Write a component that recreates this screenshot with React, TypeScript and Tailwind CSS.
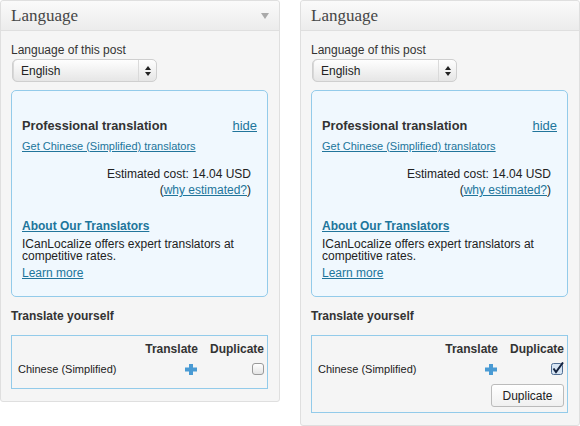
import type { ReactNode } from 'react'

const LINK = 'text-[#21759b] underline'

function SelectBox() {
  return (
    <div className="ml-px mt-[2px] flex h-[23px] w-[145px] items-center rounded-[5px] border border-[#cfcfcf] bg-linear-to-b from-[#fefefe] to-[#e6e6e6] shadow-[inset_1px_0_0_#d8d8d8]">
      <span className="flex-1 pl-[8px] text-[12px] leading-[14px] text-[#222]">English</span>
      <div className="flex h-full w-[18px] items-center justify-center border-l border-[#dadada]">
        <svg width="6" height="10" viewBox="0 0 6 10">
          <path d="M3 0 L6 4 L0 4 Z" fill="#222" />
          <path d="M0 6 L6 6 L3 10 Z" fill="#222" />
        </svg>
      </div>
    </div>
  )
}

function PlusIcon() {
  return (
    <svg width="12" height="11" viewBox="0 0 12 11">
      <rect x="4" y="0" width="4" height="11" fill="#4a9bd4" />
      <rect x="0" y="3.5" width="12" height="4" fill="#4a9bd4" />
    </svg>
  )
}

function Checkbox({ checked }: { checked: boolean }) {
  if (checked) {
    return (
      <svg width="13" height="13" viewBox="0 0 13 13" className="-mt-px">
        <rect x="0.5" y="1.5" width="11" height="11" rx="2" fill="#d6e4f3" stroke="#4f6c92" />
        <path d="M2.5 6.5 L5 10 L12 0.5" stroke="#15233f" strokeWidth="2" fill="none" />
      </svg>
    )
  }
  return (
    <div className="h-[12px] w-[12px] rounded-[3px] border border-[#9a9a9a] bg-linear-to-b from-[#ffffff] to-[#e4e4e4]" />
  )
}

function Panel({ arrow, checked, children }: { arrow?: boolean; checked: boolean; children?: ReactNode }) {
  return (
    <div className="w-[280px] self-start rounded-[3px] border border-[#dfdfdf] bg-[#f5f5f5]">
      {/* header */}
      <div className="flex h-[30px] items-center justify-between rounded-t-[3px] border-b border-[#dfdfdf] bg-linear-to-b from-[#fafafa] to-[#ececec] pl-[10px] pr-[10px]">
        <span className="text-[17px] text-[#464646] [font-family:'Liberation_Serif',Georgia,serif]">Language</span>
        {arrow && (
          <svg width="8" height="6" viewBox="0 0 8 6" className="mt-[1px]">
            <path d="M0 0 L8 0 L4 6 Z" fill="#a9a9a9" />
          </svg>
        )}
      </div>

      <div className="pb-[12px] pl-[10px] pr-[11px] pt-[12px]">
        <p className="text-[12px] leading-[14px] text-[#333]">Language of this post</p>
        <SelectBox />

        {/* professional translation box */}
        <div className="mt-[8px] rounded-[5px] border border-[#93cbea] bg-[#f0f8fe] px-[10px] pb-[15px] pt-[27px]">
          <div className="flex items-center justify-between leading-[16px]">
            <span className="text-[12.75px] font-bold text-[#333]">Professional translation</span>
            <a className={`text-[13px] ${LINK}`}>hide</a>
          </div>
          <a className={`mt-[5px] block text-[11px] leading-[14px] ${LINK}`}>Get Chinese (Simplified) translators</a>
          <div className="mt-[13px] pr-[6px] text-right text-[12px] leading-[16px] text-[#222]">
            <p>Estimated cost: 14.04 USD</p>
            <p>
              (<a className={LINK}>why estimated?</a>)
            </p>
          </div>
          <a className={`mt-[20px] block text-[12px] font-bold leading-[16px] ${LINK}`}>About Our Translators</a>
          <p className="mt-[4px] text-[12px] leading-[12px] text-[#222]">
            ICanLocalize offers expert translators at competitive rates.
          </p>
          <a className={`mt-[3px] block text-[12px] leading-[16px] ${LINK}`}>Learn more</a>
        </div>

        <p className="mt-[11px] text-[12px] font-bold leading-[16px] text-[#333]">Translate yourself</p>

        {/* translate yourself table */}
        <div className={`mt-[11px] border border-[#93cbea] pl-[6px] pr-[3px] pt-[5px] ${checked ? 'pb-[5px]' : 'pb-[12px]'}`}>
          <div className="grid grid-cols-[1fr_auto_auto] gap-x-[12px]">
            <span />
            <span className="text-[12px] font-bold leading-[16px] text-[#333]">Translate</span>
            <span className="text-[12px] font-bold leading-[16px] text-[#333]">Duplicate</span>
            <span className="mt-[5px] flex h-[14px] items-center text-[11px] leading-[14px] text-[#222]">
              Chinese (Simplified)
            </span>
            <span className="mt-[5px] flex h-[14px] items-center justify-end pr-px">
              <PlusIcon />
            </span>
            <span className="mt-[5px] flex h-[14px] items-center justify-end">
              <Checkbox checked={checked} />
            </span>
          </div>
          {children}
        </div>
      </div>
    </div>
  )
}

export default function App() {
  return (
    <div className="flex h-[426px] w-[580px] gap-[20px] bg-white [font-family:'Liberation_Sans',Arial,sans-serif]">
      <Panel arrow checked={false} />
      <Panel checked>
        <div className="mt-[8px] flex justify-end">
          <button className="h-[23px] w-[73px] rounded-[3px] border border-[#bbbbbb] bg-linear-to-b from-[#ffffff] to-[#f0f0f0] text-[12px] text-[#222]">
            Duplicate
          </button>
        </div>
      </Panel>
    </div>
  )
}
